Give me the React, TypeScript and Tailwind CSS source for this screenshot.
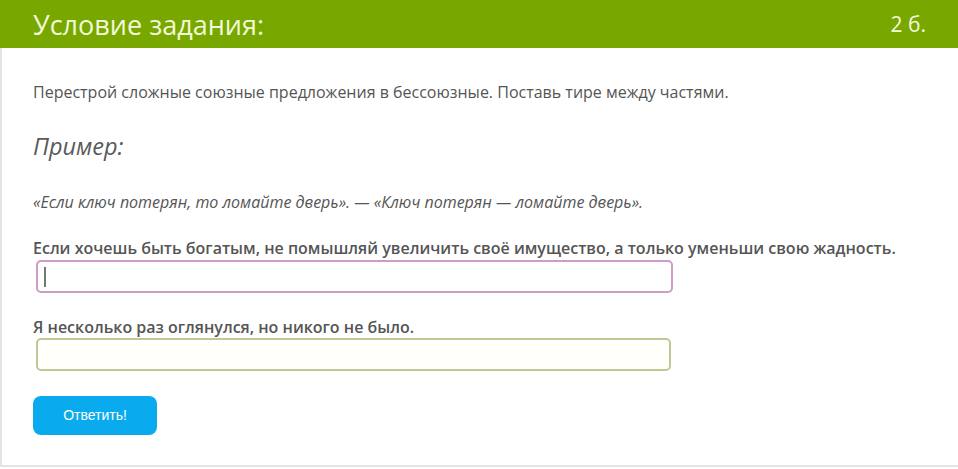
export default function App() {
  return (
    <div className="h-[469px] w-[958px] bg-white font-['Open_Sans',sans-serif]">
      <div className="flex h-[48px] items-center justify-between bg-[#78a800] pl-[33px] pr-[32px] text-[#f2f9d8]">
        <div className="text-[27px] leading-none">Условие задания:</div>
        <div className="text-[21px] leading-none">2 б.</div>
      </div>
      <div className="h-[419px] border-b-2 border-l-2 border-[#e4e4e4] pl-[31px] pr-8 text-[#555]">
        <div className="pt-[34px] text-[16px] leading-[20px]">
          Перестрой сложные союзные предложения в бессоюзные. Поставь тире между частями.
        </div>
        <div className="mt-[29px] text-[23.5px] italic leading-[30px] text-[#595959]">Пример:</div>
        <div className="mt-[31px] text-[16px] italic leading-[20px]">
          «Если ключ потерян, то ломайте дверь». — «Ключ потерян — ломайте дверь».
        </div>
        <div className="mt-[26px] text-[16px] font-semibold leading-[20px]">
          Если хочешь быть богатым, не помышляй увеличить своё имущество, а только уменьши свою жадность.
        </div>
        <div className="ml-[3px] mt-[2px] flex h-[33px] w-[637px] items-center rounded-[5px] border-2 border-[#cf9cc6] bg-white pl-[6px]">
          <div className="h-[20px] w-[2px] bg-[#777]" />
        </div>
        <div className="mt-[24px] text-[16px] font-semibold leading-[20px]">
          Я несколько раз оглянулся, но никого не было.
        </div>
        <div className="ml-[3px] mt-[1px] h-[33px] w-[635px] rounded-[5px] border-2 border-[#bccb94] bg-[#fffffc]" />
        <button className="mt-[25px] flex h-[39px] w-[124px] items-center justify-center rounded-[8px] bg-[#0aabee] font-['Liberation_Sans',sans-serif] text-[14px] text-white">
          Ответить!
        </button>
      </div>
    </div>
  );
}
